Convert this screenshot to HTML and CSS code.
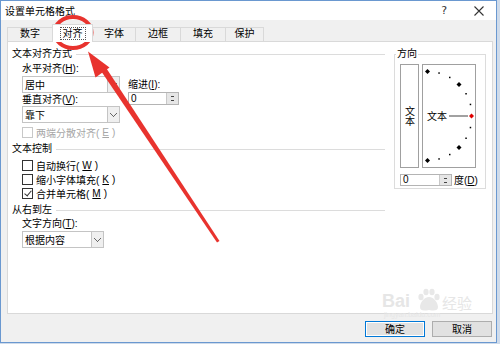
FILE: index.html
```html
<!DOCTYPE html>
<html lang="zh-CN">

<head>
    <meta charset="utf-8">
    <title>设置单元格格式</title>
    <link rel="stylesheet" href="styles.css">
</head>

<body>
    <div class="window">
        <div class="titlebar">
            <span class="title">设置单元格格式</span>
            <span class="help">?</span>
            <svg class="close" width="10" height="10" viewBox="0 0 10 10">
                <path d="M0.5 0.5 L9.5 9.5 M9.5 0.5 L0.5 9.5" stroke="#333" stroke-width="1.1" fill="none"/>
            </svg>
        </div>

        <div class="tabs">
            <div class="tab t1">数字</div>
            <div class="tab t2 active"><span class="focus">对齐</span></div>
            <div class="tab t3">字体</div>
            <div class="tab t4">边框</div>
            <div class="tab t5">填充</div>
            <div class="tab t6">保护</div>
        </div>

        <div class="panel">
            <div class="left">
                <div class="group-title">文本对齐方式</div>
                <div class="align-grid">
                    <div class="col">
                        <div class="label">水平对齐(<u>H</u>):</div>
                        <div class="select">居中<span class="drop"></span></div>
                        <div class="label tight">垂直对齐(<u>V</u>):</div>
                        <div class="select">靠下<span class="drop"></span></div>
                    </div>
                    <div class="col indent">
                        <div class="label">缩进(<u>I</u>):</div>
                        <div class="spin">0<span class="arrows"></span></div>
                    </div>
                </div>
                <div class="check disabled"><span class="box"></span>两端分散对齐(<u>E</u>)</div>

                <div class="group-title gap">文本控制</div>
                <div class="checks">
                    <div class="check"><span class="box"></span>自动换行(<u>W</u>)</div>
                    <div class="check"><span class="box"></span>缩小字体填充(<u>K</u>)</div>
                    <div class="check"><span class="box checked"></span>合并单元格(<u>M</u>)</div>
                </div>

                <div class="group-title gap">从右到左</div>
                <div class="sub">
                    <div class="label small">文字方向(<u>T</u>):</div>
                    <div class="select narrow">根据内容<span class="drop"></span></div>
                </div>
            </div>

            <div class="orient">
                <div class="orient-title">方向</div>
                <div class="orient-row">
                    <div class="vert"><span class="vtext">文本</span></div>
                    <svg class="dial" width="54" height="104" viewBox="0 0 54 104">
                        <rect x="0.5" y="0.5" width="53" height="103" fill="#fff" stroke="#a0a0a0"/>
                        <g fill="#000">
                            <path d="M5.5 5 L8 7.5 L5.5 10 L3 7.5 Z"/>
                            <path d="M37 18 L39.5 20.5 L37 23 L34.5 20.5 Z"/>
                            <path d="M37 81 L39.5 83.5 L37 86 L34.5 83.5 Z"/>
                            <path d="M5.5 94 L8 96.5 L5.5 99 L3 96.5 Z"/>
                            <rect x="16.3" y="8.3" width="1.5" height="1.5"/>
                            <rect x="27" y="12.7" width="1.5" height="1.5"/>
                            <rect x="43.3" y="29" width="1.5" height="1.5"/>
                            <rect x="47.7" y="39.7" width="1.5" height="1.5"/>
                            <rect x="47.7" y="62.8" width="1.5" height="1.5"/>
                            <rect x="43.3" y="73.5" width="1.5" height="1.5"/>
                            <rect x="27" y="89.8" width="1.5" height="1.5"/>
                            <rect x="16.3" y="94.2" width="1.5" height="1.5"/>
                        </g>
                        <line x1="27" y1="52" x2="46" y2="52" stroke="#8a8a8a" stroke-width="1.6"/>
                        <path d="M49.5 49.5 L52 52 L49.5 54.5 L47 52 Z" fill="#e00000"/>
                        <text x="5" y="55.5" class="dial-text">文本</text>
                    </svg>
                </div>
                <div class="deg-row">
                    <div class="spin wide">0<span class="arrows"></span></div>
                    <span class="deg">度(<u>D</u>)</span>
                </div>
            </div>
        </div>

        <div class="buttons">
            <button class="btn primary">确定</button>
            <button class="btn">取消</button>
        </div>
    </div>

    <div class="watermark">
        <span class="wm-bai">Bai</span>
        <svg class="wm-paw" width="24" height="24" viewBox="0 0 24 24">
            <g fill="#e8e8e8">
                <ellipse cx="5" cy="9" rx="2.6" ry="3.2"/>
                <ellipse cx="10" cy="4" rx="2.6" ry="3.2"/>
                <ellipse cx="16" cy="4" rx="2.6" ry="3.2"/>
                <ellipse cx="21" cy="9" rx="2.6" ry="3.2"/>
                <path d="M13 9 C8 9 4 15 4 19 C4 23 8 23 13 22 C18 23 22 23 22 19 C22 15 18 9 13 9 Z"/>
            </g>
        </svg>
        <span class="wm-jy">经验</span>
        <span class="wm-url">jingyan.baidu.com</span>
    </div>

    <svg class="annot" width="500" height="344" viewBox="0 0 500 344">
        <ellipse cx="73" cy="32.5" rx="18.5" ry="15.5" fill="none" stroke="#e8332e" stroke-width="4"/>
        <path d="M100 69.5 L105.2 66.6 L219.5 241 L217 242.5 Z" fill="#e8332e"/>
        <path d="M88 51.5 L109.5 67.5 L95.5 77.5 Z" fill="#e8332e"/>
    </svg>
</body>

</html>
```

FILE: styles.css
```css
body {
    margin: 0;
    position: relative;
    width: 500px;
    height: 344px;
    overflow: hidden;
    background-color: #cfdbea;
    font-family: "Liberation Sans", "Noto Sans CJK SC", sans-serif;
    font-size: 10px;
    color: #000;
}

u {
    text-decoration: underline;
    text-underline-offset: 1px;
}

.window {
    width: 497px;
    height: 343px;
    box-sizing: border-box;
    border: 1px solid #6a98d0;
    background-color: #f0f0f0;
}

.titlebar {
    display: flex;
    align-items: center;
    height: 19px;
    padding-left: 4px;
    background-color: #fff;
}

.help {
    margin-left: auto;
    margin-right: 27px;
    color: #333;
    font-family: "DejaVu Sans", sans-serif;
    font-size: 11px;
}

.close {
    margin-right: 12px;
}

.tabs {
    display: flex;
    align-items: flex-end;
    height: 21px;
    padding-left: 6px;
}

.tab {
    box-sizing: border-box;
    height: 14px;
    margin-right: -1px;
    border: 1px solid #d9d9d9;
    border-bottom: none;
    line-height: 12px;
    text-align: center;
}

.tab.active {
    position: relative;
    z-index: 1;
    height: 18px;
    margin-bottom: -1px;
    padding-top: 3px;
    background-color: #fff;
}

.focus {
    padding: 0 2px;
    outline: 1px dotted #555;
}

.t1 { width: 46px; }
.t2 { width: 41px; }
.t3 { width: 44px; }
.t4 { width: 46px; }
.t5 { width: 46px; }
.t6 { width: 39px; }

.panel {
    display: flex;
    box-sizing: border-box;
    height: 273px;
    margin: 0 3px 0 6px;
    border: 1px solid #d9d9d9;
    background-color: #fff;
}

.left {
    box-sizing: border-box;
    width: 377px;
    padding: 5px 0 0 4px;
}

.group-title {
    display: flex;
    align-items: center;
    height: 14px;
    line-height: 14px;
}

.group-title::after {
    content: "";
    flex: 1;
    margin-left: 4px;
    border-top: 1px solid #dcdcdc;
}

.group-title.gap {
    margin-top: 3px;
}

.align-grid {
    display: grid;
    grid-template-columns: 98px 51px;
    column-gap: 8px;
    margin-left: 10px;
}

.label {
    height: 15px;
    line-height: 15px;
}

.label.tight {
    height: 13px;
    line-height: 13px;
}

.label.small {
    height: 14px;
    line-height: 14px;
}

.indent {
    padding-top: 16px;
}

.select {
    display: flex;
    align-items: center;
    box-sizing: border-box;
    height: 17px;
    padding-left: 2px;
    border: 1px solid #c4c4c4;
}

.select.narrow {
    width: 82px;
}

.drop {
    align-self: stretch;
    width: 11px;
    margin-left: auto;
    border-left: 1px solid #c4c4c4;
    background-color: #efefef;
    background-image: linear-gradient(45deg, transparent 45%, #666 45%, #666 60%, transparent 60%),
        linear-gradient(-45deg, transparent 45%, #666 45%, #666 60%, transparent 60%);
    background-size: 4px 4px, 4px 4px;
    background-position: 2px 6px, 5px 6px;
    background-repeat: no-repeat;
}

.sub {
    margin-left: 10px;
}

.spin {
    display: flex;
    align-items: center;
    box-sizing: border-box;
    height: 13px;
    padding-left: 2px;
    border: 1px solid #b4b4b4;
    line-height: 11px;
}

.spin.wide {
    width: 52px;
    height: 12px;
}

.arrows {
    align-self: stretch;
    width: 11px;
    margin-left: auto;
    border-left: 1px solid #c8c8c8;
    background-color: #e6e6e6;
    background-image: linear-gradient(to top, #444 50%, transparent 50%),
        linear-gradient(to bottom, #444 50%, transparent 50%);
    background-size: 3px 2px, 3px 2px;
    background-position: 4px 2px, 4px 7px;
    background-repeat: no-repeat;
}

.check {
    display: flex;
    align-items: center;
    gap: 3px;
    height: 14px;
    margin: 2px 0 0 10px;
}

.checks {
    margin-top: 2px;
}

.checks .check {
    margin-top: 0;
}

.box {
    box-sizing: border-box;
    width: 11px;
    height: 11px;
    border: 1px solid #333;
    background-color: #fff;
}

.box.checked {
    position: relative;
}

.box.checked::after {
    content: "";
    position: absolute;
    left: 3px;
    top: 0;
    width: 3px;
    height: 6px;
    border: solid #333;
    border-width: 0 1px 1px 0;
    transform: rotate(40deg);
}

.check.disabled {
    color: #a6a6a6;
}

.check.disabled .box {
    border-color: #c8c8c8;
}

.orient {
    box-sizing: border-box;
    width: 92px;
    height: 135px;
    margin: 12px 0 0 9px;
    padding-left: 5px;
    border: 1px solid #dcdcdc;
}

.orient-title {
    width: fit-content;
    margin: -8px 0 0 -4px;
    padding: 0 1px;
    background-color: #fff;
    line-height: 13px;
}

.orient-row {
    display: flex;
    gap: 3px;
    margin-top: 4px;
}

.vert {
    display: flex;
    align-items: center;
    justify-content: center;
    box-sizing: border-box;
    width: 19px;
    height: 104px;
    border: 1px solid #a0a0a0;
}

.vtext {
    writing-mode: vertical-rl;
    text-orientation: upright;
    font-family: "Noto Sans CJK SC", sans-serif;
    line-height: 12px;
}

.dial-text {
    font-family: "Noto Sans CJK SC", sans-serif;
    font-size: 10px;
}

.deg-row {
    display: flex;
    align-items: center;
    gap: 2px;
    margin-top: 4px;
}

.buttons {
    display: flex;
    justify-content: flex-end;
    gap: 7px;
    margin: 7px 4px 0 0;
}

.btn {
    box-sizing: border-box;
    width: 60px;
    height: 16px;
    padding: 0;
    border: 1px solid #adadad;
    background-color: #e1e1e1;
    font-family: "Noto Sans CJK SC", sans-serif;
    font-size: 10px;
    line-height: 12px;
}

.btn.primary {
    border-color: #0078d7;
    box-shadow: inset 0 0 0 1px #fff;
}

.watermark {
    position: absolute;
    left: 382px;
    top: 288px;
    width: 100px;
    height: 34px;
    color: #e6e6e6;
    font-family: "Liberation Sans", sans-serif;
}

.wm-bai {
    position: absolute;
    left: 0;
    top: 3px;
    font-size: 18px;
    line-height: 20px;
    font-weight: bold;
}

.wm-paw {
    position: absolute;
    left: 34px;
    top: 0;
}

.wm-jy {
    position: absolute;
    left: 60px;
    top: 7px;
    font-family: "Noto Sans CJK SC", sans-serif;
    font-size: 15px;
    line-height: 16px;
}

.wm-url {
    position: absolute;
    left: 2px;
    top: 23px;
    font-size: 7px;
    line-height: 8px;
}

.annot {
    position: absolute;
    left: 0;
    top: 0;
    pointer-events: none;
}
```
